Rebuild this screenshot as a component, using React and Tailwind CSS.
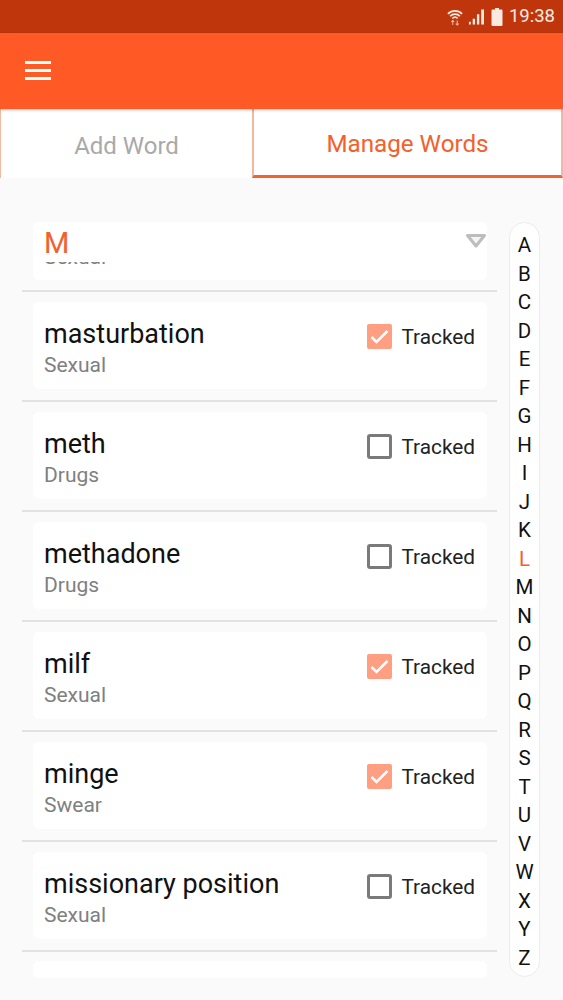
import React from "react";

const words = [
	{ word: "masturbation", category: "Sexual", tracked: true },
	{ word: "meth", category: "Drugs", tracked: false },
	{ word: "methadone", category: "Drugs", tracked: false },
	{ word: "milf", category: "Sexual", tracked: true },
	{ word: "minge", category: "Swear", tracked: true },
	{ word: "missionary position", category: "Sexual", tracked: false },
];

const letters = "ABCDEFGHIJKLMNOPQRSTUVWXYZ".split("");

function StatusBar() {
	return (
		<div className="h-[33px] bg-[#bf360c] flex items-center justify-end pr-[8px] text-[#fbe9e0]">
			<svg width="16" height="20" viewBox="0 0 18 20" fill="none" stroke="currentColor" className="mr-[5px]">
				<path d="M1 6.500C5.500 2 12.500 2 17 6.500" strokeWidth="1.800" />
				<path d="M3.500 9C6.500 6 11.500 6 14.500 9" strokeWidth="1.800" />
				<path d="M6 11.500C7.800 9.800 10.200 9.800 12 11.500" strokeWidth="1.800" />
				<path d="M6.500 14v5M4.800 15.600l1.700-1.700 1.700 1.700M11.500 19v-5M9.800 17.400l1.700 1.700 1.700-1.700" strokeWidth="1.200" opacity="0.7" />
			</svg>
			<svg width="16" height="17" viewBox="0 0 17 17" fill="currentColor" className="mr-[7px]">
				<path d="M1 14h2v3H1zM5 11h2.500v6H5zM9.500 6H12v11H9.500zM14 1h3v16h-3z" />
			</svg>
			<svg width="12" height="18" viewBox="0 0 12 18" fill="currentColor" className="mr-[6px]">
				<path d="M4 0h4v1.500h2.500a1 1 0 0 1 1 1V17a1 1 0 0 1-1 1h-9a1 1 0 0 1-1-1V2.500a1 1 0 0 1 1-1H4z" />
			</svg>
			<span className="text-[18.500px] leading-none">19:38</span>
		</div>
	);
}

function Tabs() {
	return (
		<div className="h-[69px] flex bg-white">
			<div className="w-[252px] border-l border-[#f2b9a2] flex items-center justify-center pt-[5px] text-[24px] text-[#a9a9a9]">
				Add Word
			</div>
			<div className="flex-1 border-x-2 border-x-[#f4b79f] border-b-[3px] border-b-[#f0652f] flex items-center justify-center pt-[5px] text-[24.200px] text-[#f4602b]">
				Manage Words
			</div>
		</div>
	);
}

function Checkbox({ checked }) {
	if (checked) {
		return (
			<div className="w-[25px] h-[25px] mb-[3px] rounded-[2px] bg-[#ff9e80] flex items-center justify-center">
				<svg width="21" height="21" viewBox="0 0 21 21" fill="none" stroke="white" strokeWidth="2.500">
					<path d="M2.500 11l5 5L18.500 5" />
				</svg>
			</div>
		);
	}
	return <div className="w-[25px] h-[25px] mb-[3px] rounded-[3px] border-[3px] border-[#7a7a7a]" />;
}

function WordRow({ word, category, tracked }) {
	return (
		<div className="h-[110px] border-b-2 border-[#e3e1e4] pl-[11px] pr-[10px] pt-[10px] shrink-0">
			<div className="h-[87px] bg-white rounded-[6px] flex justify-between pl-[11px] pr-[12px]">
				<div className="pt-[16px]">
					<div className="text-[27px] leading-[32px] text-[#111]">{word}</div>
					<div className="text-[21px] leading-[24px] mt-[3px] text-[#808080]">{category}</div>
				</div>
				<div className="flex items-center gap-[9px] pb-[15px]">
					<Checkbox checked={tracked} />
					<span className="text-[20.800px] text-[#222]">Tracked</span>
				</div>
			</div>
		</div>
	);
}

function SectionHeader() {
	return (
		<div className="h-[70px] border-b-2 border-[#e3e1e4] pl-[11px] pr-[10px] shrink-0">
			<div className="relative h-[58px] bg-white rounded-[6px] overflow-hidden pl-[11px]">
				<div className="h-[34px] pt-[4px] text-[29px] leading-[34px] text-[#f4602b]">M</div>
				{/* bottom edge of the row scrolling under the sticky letter */}
				<div className="h-[4px] mt-[6px] overflow-hidden">
					<div className="-mt-[17px] text-[21px] leading-[24px] text-[#808080]">Sexual</div>
				</div>
				<svg width="22" height="16" viewBox="0 0 22 16" fill="none" className="absolute right-[0px] top-[11px]">
					<path d="M2.500 2.500h17L11 13z" fill="#f4f4f4" stroke="#bdbdbd" strokeWidth="3" strokeLinejoin="round" />
				</svg>
			</div>
		</div>
	);
}

function App() {
	return (
		<div className="w-[563px] h-[1000px] overflow-hidden bg-[#fafafb] flex flex-col font-['Roboto',sans-serif]">
			<StatusBar />
			<div className="h-[76px] bg-[#ff5a25] flex items-center pl-[25px] shadow-[0_1px_3px_rgba(0,0,0,0.25)] relative">
				<div className="w-[26px] flex flex-col gap-[5px] mb-[2px]">
					<div className="h-[3px] bg-white" />
					<div className="h-[3px] bg-white" />
					<div className="h-[3px] bg-white" />
				</div>
			</div>
			<Tabs />
			<div className="flex-1 flex pl-[22px] pt-[44px] min-h-0">
				<div className="w-[475px] flex flex-col overflow-hidden">
					<SectionHeader />
					{words.map((w) => (
						<WordRow key={w.word} {...w} />
					))}
					<div className="pl-[11px] pr-[10px] pt-[9px] shrink-0">
						<div className="h-[17px] bg-white rounded-[6px]" />
					</div>
				</div>
				<div className="ml-[12px] w-[31px] h-[755px] bg-white border border-[#ececec] rounded-[16px] flex flex-col items-center pt-[8px]">
					{letters.map((l) => (
						<div key={l} className={l === "L" ? "h-[28.500px] leading-[28.500px] text-[20.500px] text-[#f4602b]" : "h-[28.500px] leading-[28.500px] text-[20.500px] text-[#111]"}>
							{l}
						</div>
					))}
				</div>
			</div>
		</div>
	);
}

export default App;
